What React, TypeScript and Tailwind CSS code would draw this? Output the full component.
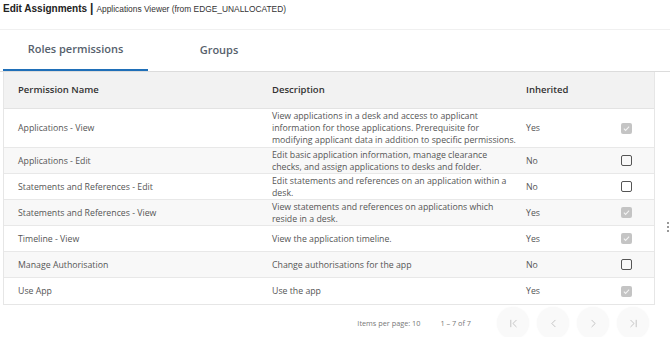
import { ChevronLeft, ChevronRight, ChevronFirst, ChevronLast } from "lucide-react";

const rows = [
  {
    name: "Applications - View",
    desc: [
      "View applications in a desk and access to applicant",
      "information for those applications. Prerequisite for",
      "modifying applicant data in addition to specific permissions.",
    ],
    inherited: true,
  },
  {
    name: "Applications - Edit",
    desc: ["Edit basic application information, manage clearance", "checks, and assign applications to desks and folder."],
    inherited: false,
  },
  {
    name: "Statements and References - Edit",
    desc: ["Edit statements and references on an application within a", "desk."],
    inherited: false,
  },
  {
    name: "Statements and References - View",
    desc: ["View statements and references on applications which", "reside in a desk."],
    inherited: true,
  },
  { name: "Timeline - View", desc: ["View the application timeline."], inherited: true },
  { name: "Manage Authorisation", desc: ["Change authorisations for the app"], inherited: false },
  { name: "Use App", desc: ["Use the app"], inherited: true },
];

function Checkbox({ checked }: { checked: boolean }) {
  if (checked) {
    return (
      <div className="w-[11px] h-[11px] rounded-[2px] bg-[#c4c4c4] flex items-center justify-center">
        <svg viewBox="0 0 12 12" className="w-[9px] h-[9px]">
          <path d="M2.5 6.2l2.3 2.3 4.7-4.9" fill="none" stroke="#f4f4f4" strokeWidth="1.4" />
        </svg>
      </div>
    );
  }
  return <div className="w-[11px] h-[11px] rounded-[2px] border-[1.5px] border-[#555]" />;
}

export default function App() {
  return (
    <div className="relative w-[670px] h-[337px] bg-white overflow-hidden font-['Open_Sans',sans-serif]">
      <div className="h-[29px] pl-[3px] pt-[1px] flex items-baseline gap-[3px] font-['Liberation_Sans',Arial,sans-serif] text-[#222]">
        <span className="text-[10px] font-bold">Edit Assignments</span>
        <span className="text-[12px] font-bold leading-none">|</span>
        <span className="text-[8.4px] text-[#333]">Applications Viewer (from EDGE_UNALLOCATED)</span>
      </div>

      <div className="h-[43px] flex border-t border-[#f0f0f0] border-b border-b-[#dcdcdc]">
        <div className="ml-[3px] w-[145px] flex items-center justify-center border-b-2 border-[#1f6fb8] text-[11px] font-semibold text-[#56616c]">
          Roles permissions
        </div>
        <div className="w-[142px] flex items-center justify-center text-[11px] font-semibold text-[#56616c]">
          Groups
        </div>
      </div>

      <div className="ml-[3px] w-[652px] border-x border-b border-[#e6e6e6]">
        <div className="grid grid-cols-[268px_254px_80px_1fr] h-[37px] items-center bg-[#f2f2f2] border-b border-[#e3e3e3] text-[9.5px] font-semibold text-[#333]">
          <div className="pl-[14px]">Permission Name</div>
          <div>Description</div>
          <div>Inherited</div>
          <div />
        </div>
        {rows.map((r, i) => (
          <div
            key={r.name}
            className={`grid grid-cols-[268px_254px_80px_1fr] min-h-[26px] items-center border-b border-[#e8e8e8] last:border-b-0 text-[8.75px] leading-[12px] text-[#555] ${
              i % 2 === 1 ? "bg-[#f8f8f8]" : "bg-white"
            } ${i === 0 ? "py-[1px]" : ""}`}
          >
            <div className="pl-[14px]">{r.name}</div>
            <div className="whitespace-nowrap">
              {r.desc.map((line) => (
                <div key={line}>{line}</div>
              ))}
            </div>
            <div>{r.inherited ? "Yes" : "No"}</div>
            <div className="flex justify-center pr-[8px]">
              <Checkbox checked={r.inherited} />
            </div>
          </div>
        ))}
      </div>

      <div className="flex items-center justify-end pr-[21px] h-[36px] text-[7.3px] text-[#777]">
        <span>Items per page: 10</span>
        <span className="ml-[20px] mr-[26px]">1 – 7 of 7</span>
        <div className="flex gap-[8px]">
          {[ChevronFirst, ChevronLeft, ChevronRight, ChevronLast].map((Icon, i) => (
            <div
              key={i}
              className="w-[32px] h-[32px] rounded-full bg-[#f9f9f9] shadow-[0_0_2px_rgba(0,0,0,0.04)] flex items-center justify-center text-[#bdbdbd]"
            >
              <Icon size={13} strokeWidth={1.6} />
            </div>
          ))}
        </div>
      </div>

      <div className="absolute right-[1px] top-[222px] flex flex-col gap-[2px]">
        <div className="w-[2px] h-[2px] rounded-full bg-[#777]" />
        <div className="w-[2px] h-[2px] rounded-full bg-[#777]" />
        <div className="w-[2px] h-[2px] rounded-full bg-[#777]" />
      </div>
    </div>
  );
}
